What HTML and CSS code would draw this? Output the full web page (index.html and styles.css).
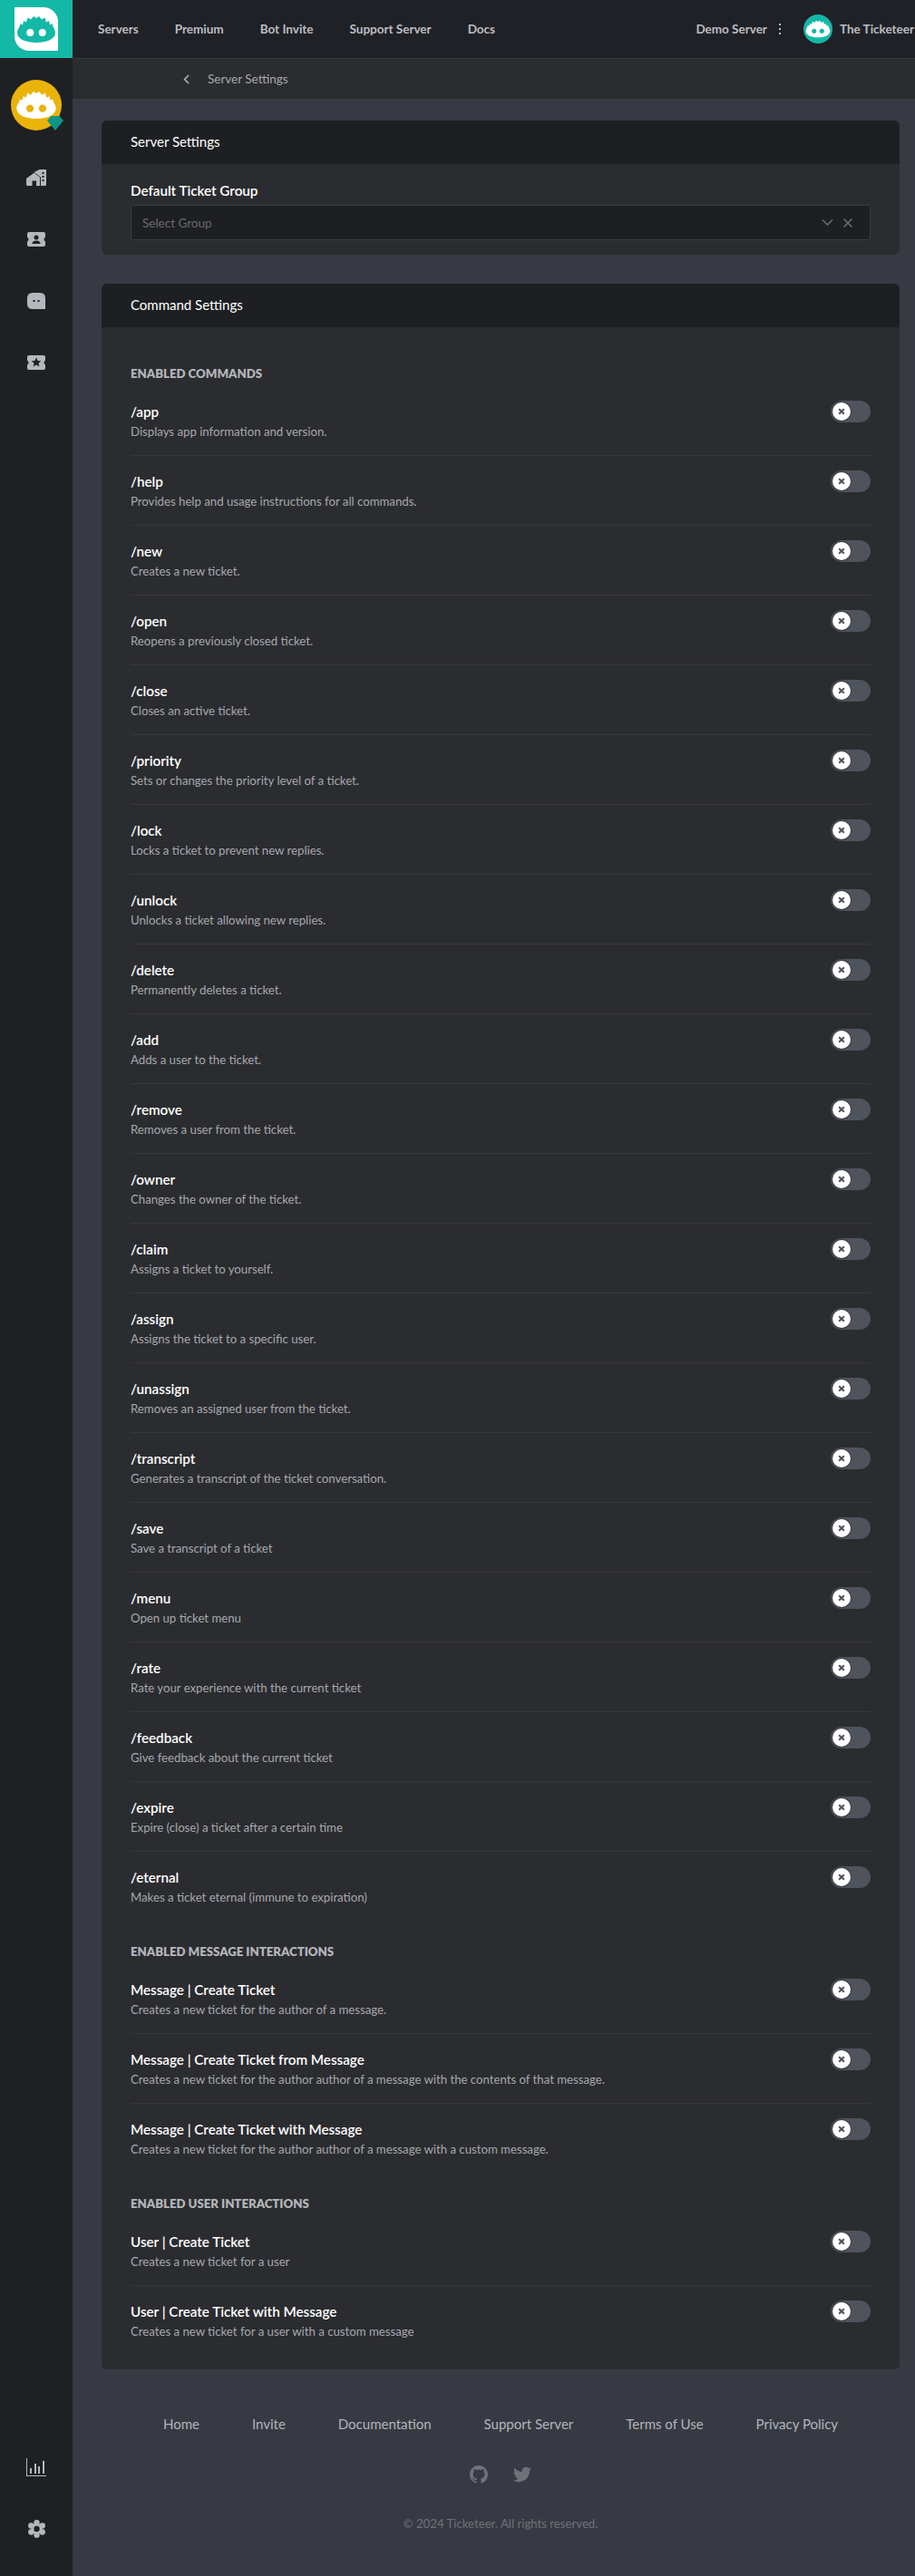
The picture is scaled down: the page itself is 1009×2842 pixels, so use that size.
FILE: index.html
```html
<!DOCTYPE html>
<html lang="en">
<head>
  <meta charset="UTF-8" />
  <meta name="viewport" content="width=device-width, initial-scale=1.0" />
  <title>Server Settings</title>
  <link rel="stylesheet" href="styles.css">
</head>
<body>
  <svg class="sprite" aria-hidden="true">
    <symbol id="bot" viewBox="2 8 44 31">
      <path class="bot-head" d="M3 27C3 23 6 21 6.500 17L9 18.500 10 14 13 15.500 14.500 10.500 18 12.500 21 9 24 11 27 9 30 12.500 33.500 10.500 35 15.500 38 14 39 18.500 41.500 17C42 21 45 23 45 27 45 34 36 38 24 38 12 38 3 34 3 27Z"/>
      <circle class="bot-eye" cx="17.300" cy="27" r="4"/>
      <circle class="bot-eye" cx="30.700" cy="27" r="4"/>
    </symbol>
  </svg>

  <div class="app">
    <aside class="sidebar">
      <a class="brand">
        <span class="brand-tile"><svg class="brand-bot"><use href="#bot"/></svg></span>
      </a>
      <div class="server-avatar">
        <svg class="server-bot"><use href="#bot"/></svg>
        <svg class="gem" viewBox="0 0 18 16"><path d="M4.500 0H13.500L18 5 9 16 0 5Z"/></svg>
      </div>
      <nav class="side-nav">
        <a class="side-link">
          <svg width="22" height="18" viewBox="0 0 22 18"><path d="M8.500 3 14.500 0H22V16.500Q22 18 20.500 18H16V8.500L8.500 3ZM0 10 8.500 3.800 15 8.500V18H11V12.500H6.500V18H1.500Q0 18 0 16.500Z"/><path class="cut" d="M17.500 3H19.500V5H17.500ZM17.500 7H19.500V9H17.500ZM17.500 11H19.500V13H17.500Z"/></svg>
        </a>
        <a class="side-link">
          <svg width="20" height="16" viewBox="0 0 20 16"><path d="M2 0H18Q20 0 20 2V5.500Q18.500 6.500 18.500 8T20 10.500V14Q20 16 18 16H2Q0 16 0 14V10.500Q1.500 9.500 1.500 8T0 5.500V2Q0 0 2 0Z"/><circle class="cut" cx="10" cy="6" r="2.500"/><path class="cut" d="M5.500 13Q5.500 9.500 10 9.500T14.500 13Z"/></svg>
        </a>
        <a class="side-link">
          <svg width="20" height="18" viewBox="0 0 20 18"><path d="M6 0H14Q20 0 20 6V18H6Q0 18 0 12V6Q0 0 6 0Z"/><rect class="cut" x="6.500" y="8" width="2" height="2"/><rect class="cut" x="11.500" y="8" width="2" height="2"/></svg>
        </a>
        <a class="side-link">
          <svg width="20" height="16" viewBox="0 0 20 16"><path d="M2 0H18Q20 0 20 2V5.500Q18.500 6.500 18.500 8T20 10.500V14Q20 16 18 16H2Q0 16 0 14V10.500Q1.500 9.500 1.500 8T0 5.500V2Q0 0 2 0Z"/><path class="cut" d="M10 2.500 11.600 6 15.300 6.300 12.500 8.700 13.400 12.500 10 10.500 6.600 12.500 7.500 8.700 4.700 6.300 8.400 6Z"/></svg>
        </a>
      </nav>
      <nav class="side-nav side-bottom">
        <a class="side-link">
          <svg width="22" height="20" viewBox="0 0 22 20"><path d="M0 0H1V19H22V20H0Z"/><rect x="4" y="11" width="2" height="6"/><rect x="9" y="6" width="2" height="11"/><rect x="13" y="9" width="2" height="8"/><rect x="18" y="3" width="2" height="14"/></svg>
        </a>
        <a class="side-link">
          <svg width="19" height="20" viewBox="0 0 19 20"><circle cx="9.500" cy="3.200" r="3.200"/><circle cx="9.500" cy="16.800" r="3.200"/><circle cx="3.300" cy="6.500" r="3.200"/><circle cx="15.700" cy="6.500" r="3.200"/><circle cx="3.300" cy="13.500" r="3.200"/><circle cx="15.700" cy="13.500" r="3.200"/><circle cx="9.500" cy="10" r="6"/><circle class="cut" cx="9.500" cy="10" r="3.200"/></svg>
        </a>
      </nav>
    </aside>

    <div class="page">
      <header class="topbar">
        <nav class="top-nav">
          <a>Servers</a>
          <a>Premium</a>
          <a>Bot Invite</a>
          <a>Support Server</a>
          <a>Docs</a>
        </nav>
        <div class="top-right">
          <span class="top-server">Demo Server</span>
          <span class="dots"><i></i><i></i><i></i></span>
          <span class="user-avatar"><svg class="user-bot"><use href="#bot"/></svg></span>
          <span class="user-name">The Ticketeer</span>
        </div>
      </header>

      <div class="crumbs">
        <svg class="crumb-back" width="7" height="11" viewBox="0 0 7 11"><path d="M6 1 1.500 5.500 6 10"/></svg>
        <span>Server Settings</span>
      </div>

      <main class="content">
        <section class="card">
          <h2 class="card-title">Server Settings</h2>
          <div class="card-body group-body">
            <label class="field-label">Default Ticket Group</label>
            <div class="select">
              <span class="select-text">Select Group</span>
              <svg class="select-icon" width="13" height="9" viewBox="0 0 13 9"><path d="M1 1.500 6.500 7 12 1.500"/></svg>
              <svg class="select-icon" width="10" height="10" viewBox="0 0 10 10"><path d="M.5.500 9.500 9.500M9.500.500 .5 9.500"/></svg>
            </div>
          </div>
        </section>

        <section class="card">
          <h2 class="card-title">Command Settings</h2>
          <div class="card-body command-body">
            <h3 class="section-head">Enabled Commands</h3>
            <div class="rows">
              <div class="row"><div><div class="row-title">/app</div><div class="row-desc">Displays app information and version.</div></div><span class="toggle"><span class="knob"></span></span></div>
              <div class="row"><div><div class="row-title">/help</div><div class="row-desc">Provides help and usage instructions for all commands.</div></div><span class="toggle"><span class="knob"></span></span></div>
              <div class="row"><div><div class="row-title">/new</div><div class="row-desc">Creates a new ticket.</div></div><span class="toggle"><span class="knob"></span></span></div>
              <div class="row"><div><div class="row-title">/open</div><div class="row-desc">Reopens a previously closed ticket.</div></div><span class="toggle"><span class="knob"></span></span></div>
              <div class="row"><div><div class="row-title">/close</div><div class="row-desc">Closes an active ticket.</div></div><span class="toggle"><span class="knob"></span></span></div>
              <div class="row"><div><div class="row-title">/priority</div><div class="row-desc">Sets or changes the priority level of a ticket.</div></div><span class="toggle"><span class="knob"></span></span></div>
              <div class="row"><div><div class="row-title">/lock</div><div class="row-desc">Locks a ticket to prevent new replies.</div></div><span class="toggle"><span class="knob"></span></span></div>
              <div class="row"><div><div class="row-title">/unlock</div><div class="row-desc">Unlocks a ticket allowing new replies.</div></div><span class="toggle"><span class="knob"></span></span></div>
              <div class="row"><div><div class="row-title">/delete</div><div class="row-desc">Permanently deletes a ticket.</div></div><span class="toggle"><span class="knob"></span></span></div>
              <div class="row"><div><div class="row-title">/add</div><div class="row-desc">Adds a user to the ticket.</div></div><span class="toggle"><span class="knob"></span></span></div>
              <div class="row"><div><div class="row-title">/remove</div><div class="row-desc">Removes a user from the ticket.</div></div><span class="toggle"><span class="knob"></span></span></div>
              <div class="row"><div><div class="row-title">/owner</div><div class="row-desc">Changes the owner of the ticket.</div></div><span class="toggle"><span class="knob"></span></span></div>
              <div class="row"><div><div class="row-title">/claim</div><div class="row-desc">Assigns a ticket to yourself.</div></div><span class="toggle"><span class="knob"></span></span></div>
              <div class="row"><div><div class="row-title">/assign</div><div class="row-desc">Assigns the ticket to a specific user.</div></div><span class="toggle"><span class="knob"></span></span></div>
              <div class="row"><div><div class="row-title">/unassign</div><div class="row-desc">Removes an assigned user from the ticket.</div></div><span class="toggle"><span class="knob"></span></span></div>
              <div class="row"><div><div class="row-title">/transcript</div><div class="row-desc">Generates a transcript of the ticket conversation.</div></div><span class="toggle"><span class="knob"></span></span></div>
              <div class="row"><div><div class="row-title">/save</div><div class="row-desc">Save a transcript of a ticket</div></div><span class="toggle"><span class="knob"></span></span></div>
              <div class="row"><div><div class="row-title">/menu</div><div class="row-desc">Open up ticket menu</div></div><span class="toggle"><span class="knob"></span></span></div>
              <div class="row"><div><div class="row-title">/rate</div><div class="row-desc">Rate your experience with the current ticket</div></div><span class="toggle"><span class="knob"></span></span></div>
              <div class="row"><div><div class="row-title">/feedback</div><div class="row-desc">Give feedback about the current ticket</div></div><span class="toggle"><span class="knob"></span></span></div>
              <div class="row"><div><div class="row-title">/expire</div><div class="row-desc">Expire (close) a ticket after a certain time</div></div><span class="toggle"><span class="knob"></span></span></div>
              <div class="row"><div><div class="row-title">/eternal</div><div class="row-desc">Makes a ticket eternal (immune to expiration)</div></div><span class="toggle"><span class="knob"></span></span></div>
            </div>

            <h3 class="section-head">Enabled Message Interactions</h3>
            <div class="rows">
              <div class="row"><div><div class="row-title">Message | Create Ticket</div><div class="row-desc">Creates a new ticket for the author of a message.</div></div><span class="toggle"><span class="knob"></span></span></div>
              <div class="row"><div><div class="row-title">Message | Create Ticket from Message</div><div class="row-desc">Creates a new ticket for the author author of a message with the contents of that message.</div></div><span class="toggle"><span class="knob"></span></span></div>
              <div class="row"><div><div class="row-title">Message | Create Ticket with Message</div><div class="row-desc">Creates a new ticket for the author author of a message with a custom message.</div></div><span class="toggle"><span class="knob"></span></span></div>
            </div>

            <h3 class="section-head">Enabled User Interactions</h3>
            <div class="rows">
              <div class="row"><div><div class="row-title">User | Create Ticket</div><div class="row-desc">Creates a new ticket for a user</div></div><span class="toggle"><span class="knob"></span></span></div>
              <div class="row"><div><div class="row-title">User | Create Ticket with Message</div><div class="row-desc">Creates a new ticket for a user with a custom message</div></div><span class="toggle"><span class="knob"></span></span></div>
            </div>
          </div>
        </section>

        <footer class="footer">
          <nav class="footer-links">
            <a>Home</a>
            <a>Invite</a>
            <a>Documentation</a>
            <a>Support Server</a>
            <a>Terms of Use</a>
            <a>Privacy Policy</a>
          </nav>
          <div class="footer-social">
            <svg width="20" height="20" viewBox="0 0 16 16"><path d="M8 0C3.580 0 0 3.580 0 8c0 3.540 2.290 6.530 5.470 7.590.4.070.55-.17.55-.38 0-.19-.01-.82-.01-1.490-2.010.37-2.530-.49-2.690-.94-.09-.23-.48-.94-.82-1.130-.28-.15-.68-.52-.01-.53.63-.01 1.080.58 1.230.82.72 1.210 1.870.87 2.330.66.070-.52.28-.87.51-1.070-1.780-.2-3.640-.89-3.640-3.950 0-.87.31-1.590.82-2.150-.08-.2-.36-1.020.08-2.120 0 0 .67-.21 2.200.82.64-.18 1.320-.27 2-.27.68 0 1.360.09 2 .27 1.530-1.040 2.200-.82 2.200-.82.44 1.100.16 1.920.08 2.120.51.56.82 1.270.82 2.150 0 3.070-1.870 3.750-3.650 3.950.29.25.54.73.54 1.480 0 1.070-.01 1.930-.01 2.200 0 .21.15.46.55.38A8.013 8.013 0 0016 8c0-4.420-3.580-8-8-8z"/></svg>
            <svg width="20" height="20" viewBox="0 0 24 24"><path d="M23.953 4.570a10 10 0 01-2.825.775 4.958 4.958 0 002.163-2.723c-.951.555-2.005.959-3.127 1.184a4.920 4.920 0 00-8.384 4.482C7.690 8.095 4.067 6.130 1.640 3.162a4.822 4.822 0 00-.666 2.475c0 1.710.87 3.213 2.188 4.096a4.904 4.904 0 01-2.228-.616v.06a4.923 4.923 0 003.946 4.827 4.996 4.996 0 01-2.212.085 4.936 4.936 0 004.604 3.417 9.867 9.867 0 01-6.102 2.105c-.39 0-.779-.023-1.170-.067a13.995 13.995 0 007.557 2.209c9.053 0 13.998-7.496 13.998-13.985 0-.21 0-.42-.015-.63A9.935 9.935 0 0024 4.590z"/></svg>
          </div>
          <p class="copyright">© 2024 Ticketeer. All rights reserved.</p>
        </footer>
      </main>
    </div>
  </div>
</body>
</html>
```

FILE: styles.css
```css
* {
  box-sizing: border-box;
}
body {
  margin: 0;
  background: #373a43;
  color: #fff;
  font-family: 'Lato', sans-serif;
  font-size: 13.5px;
}
a {
  color: inherit;
}
.sprite {
  display: none;
}
.bot-head {
  fill: var(--bot);
}
.bot-eye {
  fill: var(--eye);
}
.app {
  display: flex;
  min-height: 2842px;
}

/* sidebar */
.sidebar {
  width: 80px;
  flex-shrink: 0;
  background: #1f2024;
  display: flex;
  flex-direction: column;
  align-items: center;
}
.brand {
  width: 80px;
  height: 64px;
  background: #14b8a6;
  display: flex;
  align-items: center;
  justify-content: center;
}
.brand-tile {
  width: 48px;
  height: 48px;
  background: #fff;
  border-radius: 1px 16px 0 16px;
  display: flex;
  align-items: center;
  justify-content: center;
}
.brand-bot {
  width: 44px;
  height: 31px;
  --bot: #14b8a6;
  --eye: #fff;
}
.server-avatar {
  position: relative;
  width: 56px;
  height: 56px;
  margin-top: 24px;
  border-radius: 50%;
  background: #eab308;
  display: flex;
  align-items: center;
  justify-content: center;
}
.server-bot {
  width: 46px;
  height: 32px;
  --bot: #fff;
  --eye: #eab308;
}
.gem {
  position: absolute;
  right: -2px;
  bottom: 0;
  width: 18px;
  height: 16px;
  fill: #0d9488;
}
.side-nav {
  display: flex;
  flex-direction: column;
  margin-top: 18px;
}
.side-bottom {
  margin-top: auto;
  margin-bottom: 18px;
}
.side-link {
  height: 68px;
  display: flex;
  align-items: center;
  justify-content: center;
}
.side-link svg {
  fill: #b5b7bc;
}
.side-link svg .cut {
  fill: #1f2024;
}

/* top */
.page {
  flex: 1;
  min-width: 0;
  display: flex;
  flex-direction: column;
}
.topbar {
  height: 65px;
  background: #202126;
  border-bottom: 1px solid #36383d;
  display: flex;
  align-items: center;
  justify-content: space-between;
  padding: 0 1px 0 28px;
}
.top-nav {
  display: flex;
  gap: 40px;
  font-weight: 700;
  color: #bbbdc2;
}
.top-right {
  display: flex;
  align-items: center;
  font-weight: 700;
  color: #bbbdc2;
  margin-top: -1px;
  white-space: nowrap;
}
.dots {
  display: flex;
  flex-direction: column;
  gap: 3px;
  margin: 0 25px 0 13px;
}
.dots i {
  width: 2px;
  height: 2px;
  background: #bbbdc2;
}
.user-avatar {
  width: 32px;
  height: 32px;
  border-radius: 50%;
  background: #14b8a6;
  display: flex;
  align-items: center;
  justify-content: center;
  margin-right: 8px;
}
.user-bot {
  width: 28px;
  height: 20px;
  --bot: #fff;
  --eye: #14b8a6;
}
.crumbs {
  height: 44px;
  background: #2b2c30;
  display: flex;
  align-items: center;
  padding-left: 122px;
  gap: 20px;
  color: #a6a8ae;
}
.crumb-back {
  fill: none;
  stroke: #b5b7bc;
  stroke-width: 1.500;
}

/* cards */
.content {
  padding: 24px 17px 0 32px;
  display: flex;
  flex-direction: column;
  gap: 32px;
}
.card {
  background: #2b2c30;
  border-radius: 6px;
  overflow: hidden;
}
.card-title {
  margin: 0;
  height: 48px;
  background: #1e1f23;
  padding-left: 32px;
  font-size: 15px;
  font-weight: 400;
  line-height: 47px;
  color: #fff;
}
.card-body {
  padding: 0 32px;
}
.group-body {
  padding-top: 19px;
  padding-bottom: 16px;
}
.field-label {
  display: block;
  font-size: 15.2px;
  font-weight: 600;
  line-height: 20px;
  margin-bottom: 6px;
}
.select {
  height: 39px;
  background: #1e1f23;
  border: 1px solid #3a3c41;
  border-radius: 2px;
  display: flex;
  align-items: center;
  padding: 0 19px 0 12px;
  gap: 11px;
}
.select-text {
  flex: 1;
  color: #686a70;
}
.select-icon {
  fill: none;
  stroke: #6b6d72;
  stroke-width: 1.500;
}
.command-body {
  padding-top: 38px;
  padding-bottom: 16px;
}
.section-head {
  margin: 0;
  height: 27px;
  font-size: 13.2px;
  font-weight: 800;
  line-height: 26px;
  text-transform: uppercase;
  color: #b3b5ba;
}
.rows {
  margin-bottom: 21px;
}
.rows:last-child {
  margin-bottom: 0;
}
.row {
  display: flex;
  justify-content: space-between;
  align-items: flex-start;
  padding: 18px 0 16px;
  border-bottom: 1px solid #36383d;
}
.rows .row:last-child {
  border-bottom: none;
}
.row-title {
  font-size: 15.2px;
  font-weight: 600;
  line-height: 20px;
  margin-bottom: 2px;
}
.row-desc {
  font-size: 13.2px;
  line-height: 20px;
  color: #a6a8ae;
}
.toggle {
  width: 44px;
  height: 24px;
  margin-top: -2px;
  border-radius: 12px;
  background: #4f535c;
  padding: 2px;
  flex-shrink: 0;
}
.knob {
  position: relative;
  display: block;
  width: 20px;
  height: 20px;
  border-radius: 50%;
  background: #fff;
  box-shadow: 0 0 0 1px #3b3e46;
}
.knob::before,
.knob::after {
  content: "";
  position: absolute;
  left: 6px;
  top: 9px;
  width: 8px;
  height: 2px;
  background: #4f535c;
  transform: rotate(45deg);
}
.knob::after {
  transform: rotate(-45deg);
}

/* footer */
.footer {
  padding-top: 18px;
  display: flex;
  flex-direction: column;
  align-items: center;
}
.footer-links {
  display: flex;
  gap: 58px;
  font-size: 15px;
  line-height: 20px;
  color: #b2b4b9;
}
.footer-social {
  display: flex;
  gap: 28px;
  margin-top: 36px;
  fill: #6f7279;
}
.copyright {
  margin: 34px 0 0;
  font-size: 13.2px;
  line-height: 20px;
  color: #6f7279;
}
```
